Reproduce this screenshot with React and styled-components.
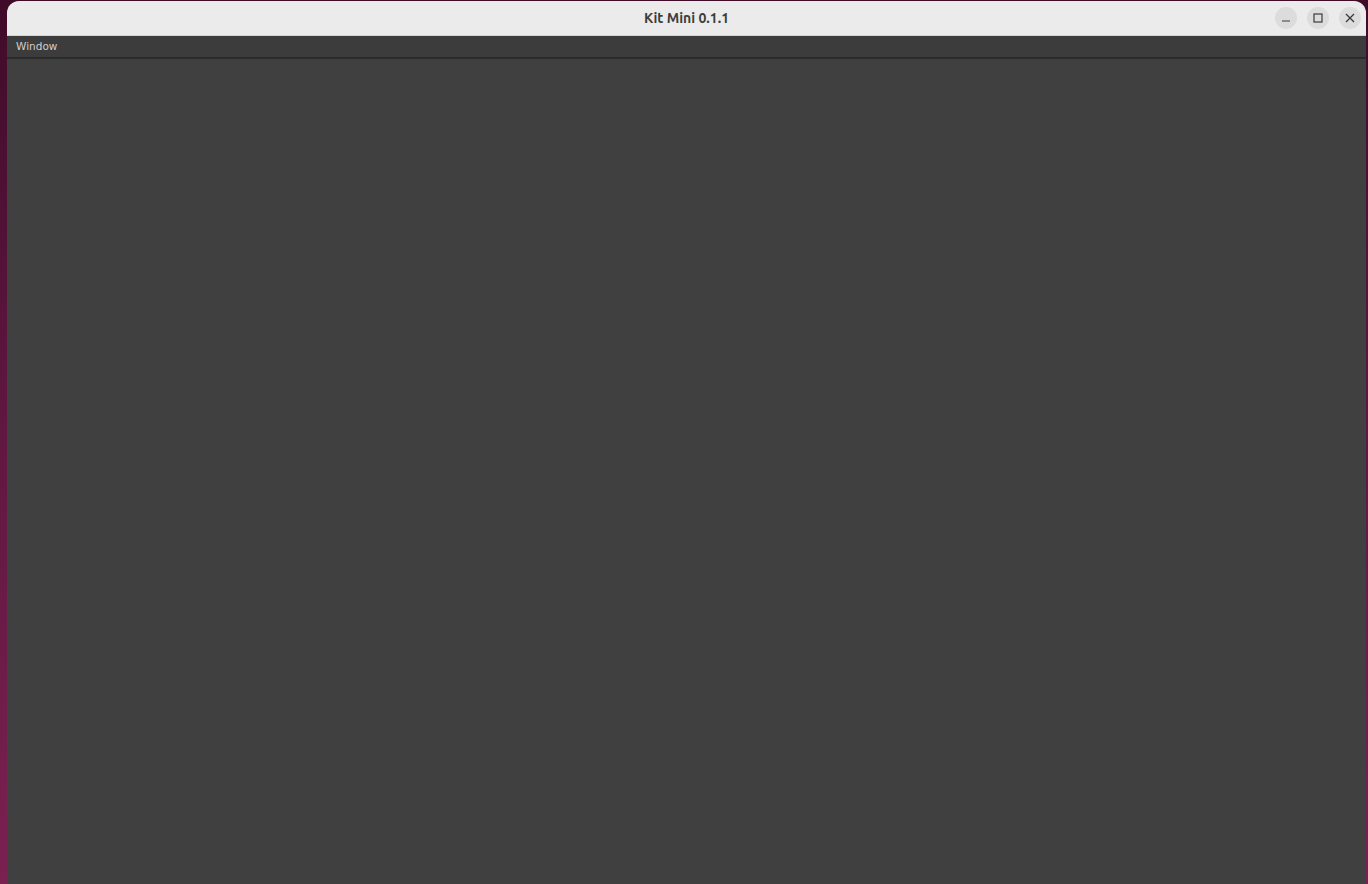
import styled, { createGlobalStyle } from 'styled-components';

const GlobalStyle = createGlobalStyle`
  html, body {
    margin: 0;
    padding: 0;
    height: 100%;
    overflow: hidden;
  }
  body {
    font-family: Ubuntu, "Noto Sans", "DejaVu Sans", sans-serif;
  }
`;

const Desktop = styled.div`
  width: 1368px;
  height: 884px;
  background: linear-gradient(180deg, #3f0b28 0%, #5e1640 45%, #7a2152 100%);
  display: flex;
  padding: 1px 2px 0 7px;
  box-sizing: border-box;
`;

const Window = styled.div`
  flex: 1;
  display: flex;
  flex-direction: column;
  border-radius: 12px 12px 0 0;
  overflow: hidden;
  background: #404040;
`;

const TitleBar = styled.div`
  height: 35px;
  flex-shrink: 0;
  background: #ebebeb;
  display: flex;
  align-items: center;
  justify-content: center;
  position: relative;
  border-bottom: 1px solid #d4d4d4;
  box-sizing: border-box;
`;

const Title = styled.div`
  font-size: 14px;
  font-weight: bold;
  color: #3d3d3d;
`;

const Controls = styled.div`
  position: absolute;
  right: 5px;
  top: 6px;
  display: flex;
  gap: 10px;
`;

const ControlButton = styled.div`
  width: 22px;
  height: 22px;
  border-radius: 50%;
  background: #dcdcdc;
  display: flex;
  align-items: center;
  justify-content: center;
`;

const MenuBar = styled.div`
  height: 19px;
  padding: 0 0 2px 9px;
  flex-shrink: 0;
  background: #3c3c3c;
  border-bottom: 2px solid #2b2b2b;
  display: flex;
  align-items: center;
`;

const MenuItem = styled.div`
  font-family: "DejaVu Sans", sans-serif;
  font-size: 10.5px;
  color: #cfcfcf;
`;

const Content = styled.div`
  flex: 1;
  background: #404040;
`;

const App = () => {
  return (
    <>
      <GlobalStyle />
      <Desktop>
        <Window>
          <TitleBar>
            <Title>Kit Mini 0.1.1</Title>
            <Controls>
              <ControlButton>
                <svg width="10" height="10" viewBox="0 0 10 10">
                  <line x1="1" y1="8" x2="9" y2="8" stroke="#3a3a3a" strokeWidth="1.2" />
                </svg>
              </ControlButton>
              <ControlButton>
                <svg width="10" height="10" viewBox="0 0 10 10">
                  <rect x="1" y="1" width="8" height="8" fill="none" stroke="#3a3a3a" strokeWidth="1.2" />
                </svg>
              </ControlButton>
              <ControlButton>
                <svg width="10" height="10" viewBox="0 0 10 10">
                  <path d="M1 1 L9 9 M9 1 L1 9" stroke="#3a3a3a" strokeWidth="1.3" />
                </svg>
              </ControlButton>
            </Controls>
          </TitleBar>
          <MenuBar>
            <MenuItem>Window</MenuItem>
          </MenuBar>
          <Content />
        </Window>
      </Desktop>
    </>
  );
};

export default App;
